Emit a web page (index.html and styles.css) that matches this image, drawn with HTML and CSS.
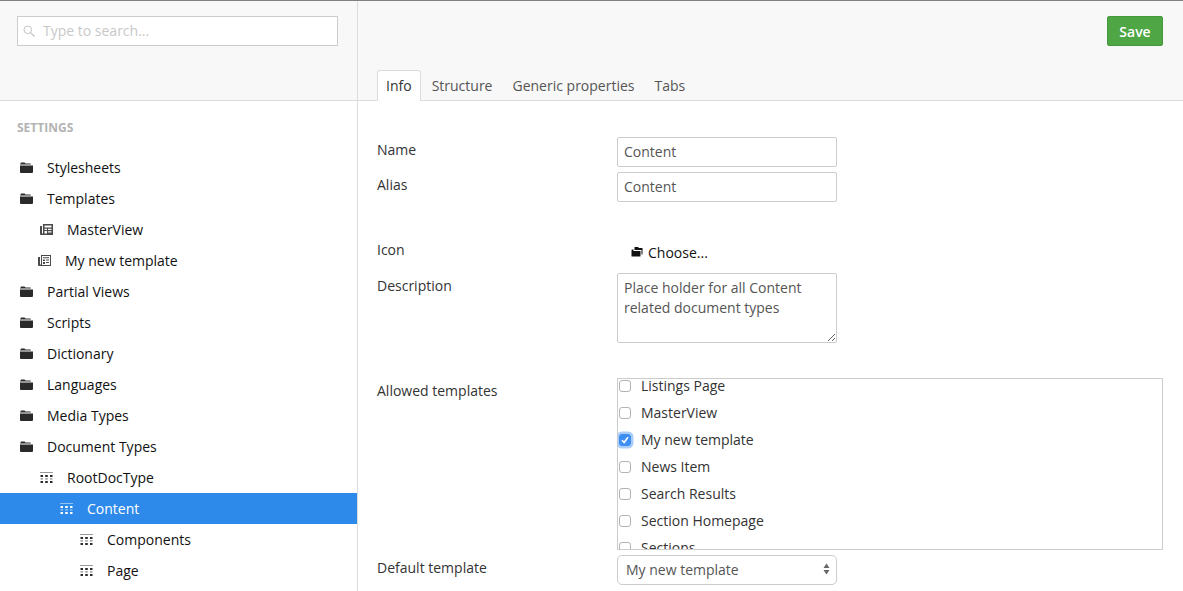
FILE: index.html
```html
<!DOCTYPE html>
<html>

<head>
	<meta charset="utf-8">
	<title>Settings</title>
	<link rel="stylesheet" href="styles.css">
</head>

<body>
	<svg class="defs" width="0" height="0">
		<symbol id="folder" viewBox="0 0 13 11">
			<path d="M0.5 1.5Q0.5 0.5 1.5 0.5H4.5L5.5 1.5H10Q11 1.5 11 2.5H1.5Q0.5 2.5 0.5 3.5ZM0 3.5H13V10Q13 11 12 11H1Q0 11 0 10Z" fill="currentColor"/>
		</symbol>
		<symbol id="template" viewBox="0 0 13 11">
			<path fill-rule="evenodd" d="M3 0H13V11H1Q0 11 0 10V2H2V9.5H3ZM4.5 1.5V3.5H11.5V1.5ZM4.5 4.8V6H7V4.8ZM4.5 7V9.5H7V7ZM8 4.8V6H11.5V4.8ZM8 7.2V8.4H11.5V7.2Z" fill="currentColor"/>
		</symbol>
		<symbol id="template-open" viewBox="0 0 13 11">
			<path fill-rule="evenodd" d="M3 0H13V11H1Q0 11 0 10V2H2V9.5H3ZM4 1V10H12V1ZM5 2.2H11V3.2H5ZM5 4.6H7V6H5ZM8 4.6H11V5.6H8ZM5 7H7V9H5ZM8 7H11V8H8Z" fill="currentColor"/>
		</symbol>
		<symbol id="doctype" viewBox="0 0 13 11">
			<path d="M0 0H13V0.8H0Z" fill="currentColor" opacity="0.6"/>
			<path d="M0.5 3H3V5H0.5ZM5.2 3H7.8V5H5.2ZM10 3H12.5V5H10ZM0.5 9H3V11H0.5ZM5.2 9H7.8V11H5.2ZM10 9H12.5V11H10Z" fill="currentColor"/>
			<path d="M0.5 6.2H3V7.6H0.5ZM5.2 6.2H7.8V7.6H5.2ZM10 6.2H12.5V7.6H10Z" fill="currentColor" opacity="0.55"/>
		</symbol>
	</svg>

	<div class="app">
		<div class="sidebar">
			<div class="search-box">
				<div class="search">
					<svg class="search-icon" width="12" height="12" viewBox="0 0 12 12">
						<circle cx="4.8" cy="4.8" r="3.8" fill="none" stroke="currentColor"/>
						<path d="M7.6 7.6L11.5 11.5" stroke="currentColor" stroke-width="1.3"/>
					</svg>
					<input class="search-input" type="text" placeholder="Type to search...">
				</div>
			</div>
			<div class="section-title">SETTINGS</div>
			<ul class="tree">
				<li class="node"><svg class="ico"><use href="#folder"/></svg>Stylesheets</li>
				<li class="node"><svg class="ico"><use href="#folder"/></svg>Templates</li>
				<li class="node lvl1"><svg class="ico soft"><use href="#template"/></svg>MasterView</li>
				<li class="node lvl1 shifted"><svg class="ico soft"><use href="#template-open"/></svg>My new template</li>
				<li class="node"><svg class="ico"><use href="#folder"/></svg>Partial Views</li>
				<li class="node"><svg class="ico"><use href="#folder"/></svg>Scripts</li>
				<li class="node"><svg class="ico"><use href="#folder"/></svg>Dictionary</li>
				<li class="node"><svg class="ico"><use href="#folder"/></svg>Languages</li>
				<li class="node"><svg class="ico"><use href="#folder"/></svg>Media Types</li>
				<li class="node"><svg class="ico"><use href="#folder"/></svg>Document Types</li>
				<li class="node lvl1"><svg class="ico"><use href="#doctype"/></svg>RootDocType</li>
				<li class="node lvl2 current"><svg class="ico"><use href="#doctype"/></svg>Content</li>
				<li class="node lvl3"><svg class="ico"><use href="#doctype"/></svg>Components</li>
				<li class="node lvl3"><svg class="ico"><use href="#doctype"/></svg>Page</li>
			</ul>
		</div>

		<div class="main">
			<div class="main-head">
				<div class="actions"><button class="save" type="button">Save</button></div>
				<div class="tabs">
					<a class="tab active">Info</a>
					<a class="tab">Structure</a>
					<a class="tab">Generic properties</a>
					<a class="tab">Tabs</a>
				</div>
			</div>

			<form class="form">
				<div class="row row-name">
					<label class="lbl">Name</label>
					<input class="field" type="text" value="Content">
				</div>
				<div class="row row-alias">
					<label class="lbl">Alias</label>
					<input class="field" type="text" value="Content">
				</div>
				<div class="row row-icon">
					<label class="lbl">Icon</label>
					<div class="choose">
						<svg class="choose-ico" width="12" height="10" viewBox="0 0 12 10">
							<path d="M3.5 0H7L8 1H11.5V7.5H10.5V3H3.5ZM0.5 3.5Q0.5 2.5 1.5 2.5H2.5V4H9.5V9Q9.5 9.5 9 9.5H1Q0.5 9.5 0.5 9Z" fill="#111"/>
						</svg>Choose...
					</div>
				</div>
				<div class="row row-desc">
					<label class="lbl">Description</label>
					<textarea class="field area">Place holder for all Content related document types</textarea>
				</div>
				<div class="row row-allowed">
					<label class="lbl">Allowed templates</label>
					<div class="listbox">
						<div class="opt"><span class="box"></span>Listings Page</div>
						<div class="opt"><span class="box"></span>MasterView</div>
						<div class="opt"><span class="box checked">
							<svg width="8" height="8" viewBox="0 0 8 8"><path d="M1 4.3L3.1 6.5L7 1.3" fill="none" stroke="#fff" stroke-width="1.6"/></svg>
						</span>My new template</div>
						<div class="opt"><span class="box"></span>News Item</div>
						<div class="opt"><span class="box"></span>Search Results</div>
						<div class="opt"><span class="box"></span>Section Homepage</div>
						<div class="opt"><span class="box"></span>Sections</div>
					</div>
				</div>
				<div class="row row-default">
					<label class="lbl">Default template</label>
					<div class="select">
						My new template
						<svg class="arrows" width="7" height="12" viewBox="0 0 7 12">
							<path d="M3.5 0.5L6.5 5H0.5ZM0.5 7H6.5L3.5 11.5Z" fill="#666"/>
						</svg>
					</div>
				</div>
			</form>
		</div>
	</div>
</body>

</html>
```
FILE: styles.css
```css
* {
	box-sizing: border-box;
}

html,
body {
	height: 100%;
	margin: 0;
	overflow: hidden;
}

body {
	font-family: "Open Sans", sans-serif;
	font-size: 14px;
	color: #222;
	background-color: #fff;
}

.defs {
	display: block;
	height: 0;
}

.app {
	display: flex;
	height: 591px;
	border-top: 1px solid #808080;
}

/* left column */
.sidebar {
	flex: 0 0 358px;
	border-right: 1px solid #dcdcdc;
}

.search-box {
	height: 100px;
	padding: 15px 19px 0 17px;
	background-color: #f8f8f8;
	border-bottom: 1px solid #dcdcdc;
}

.search {
	display: flex;
	align-items: center;
	height: 30px;
	background-color: #fff;
	border: 1px solid #ccc;
}

.search-icon {
	margin: 0 8px 0 5px;
	color: #c4c4c4;
}

.search-input {
	flex: 1;
	min-width: 0;
	border: 0;
	outline: 0;
	padding: 0 0 2px;
	font: 14px "Open Sans", sans-serif;
}

.search-input::placeholder {
	color: #c8c8c8;
	opacity: 1;
}

.section-title {
	padding: 19px 0 0 17px;
	height: 51px;
	font-size: 12px;
	line-height: 16px;
	font-weight: 700;
	color: #b3b3b3;
}

.tree {
	list-style: none;
	margin: 0;
	padding: 0;
}

.node {
	display: flex;
	align-items: center;
	height: 31px;
	padding-left: 20px;
	color: #111;
}

.ico {
	flex: none;
	width: 13px;
	height: 11px;
	margin-right: 14px;
	color: #2a2a2a;
}

.ico.soft {
	color: #4a4a4a;
}

.lvl1 {
	padding-left: 40px;
}

.lvl1.shifted {
	padding-left: 38px;
}

.lvl2 {
	padding-left: 60px;
}

.lvl3 {
	padding-left: 80px;
}

.current {
	background-color: #2e8aea;
	color: #fff;
}

.current .ico {
	color: #fff;
}

/* right column */
.main {
	flex: 1;
	min-width: 0;
}

.main-head {
	height: 100px;
	padding: 15px 20px 0 19px;
	background-color: #f8f8f8;
	border-bottom: 1px solid #dcdcdc;
}

.actions {
	display: flex;
	justify-content: flex-end;
	height: 54px;
}

.save {
	width: 56px;
	height: 30px;
	padding: 0;
	font: 600 14px "Open Sans", sans-serif;
	color: #fff;
	background-color: #4ea644;
	border: 1px solid #46983d;
	border-radius: 2px;
}

.tabs {
	display: flex;
	height: 31px;
}

.tab {
	height: 31px;
	padding: 0 9px;
	margin-right: 2px;
	line-height: 32px;
	color: #555;
}

.tab.active {
	background-color: #fff;
	color: #333;
	line-height: 30px;
	border: 1px solid #dcdcdc;
	border-bottom: 0;
	border-radius: 3px 3px 0 0;
	padding: 0 8px;
}

.form {
	padding: 36px 20px 0 19px;
}

.row {
	display: grid;
	grid-template-columns: 240px 1fr;
	align-items: start;
}

.lbl {
	color: #333;
	line-height: 20px;
}

.field {
	display: block;
	width: 220px;
	height: 30px;
	padding: 0 6px 2px;
	font: 14px "Open Sans", sans-serif;
	color: #555;
	background-color: #fff;
	border: 1px solid #ccc;
	border-radius: 2px;
	outline: 0;
}

.row-name .lbl {
	margin-top: 3px;
}

.row-alias {
	margin-top: 5px;
}

.row-alias .lbl {
	margin-top: 3px;
}

.row-icon {
	margin-top: 28px;
	height: 43px;
}

.row-icon .lbl {
	margin-top: 10px;
}

.choose {
	display: flex;
	align-items: center;
	height: 20px;
	margin-top: 12px;
	padding-left: 14px;
	color: #111;
}

.choose-ico {
	margin-right: 5px;
}

.row-desc .lbl {
	margin-top: 3px;
}

.area {
	height: 70px;
	padding: 4px 6px;
	line-height: 20px;
}

.row-allowed {
	margin-top: 35px;
}

.row-allowed .lbl {
	margin-top: 3px;
}

.listbox {
	height: 172px;
	overflow: hidden;
	border: 1px solid #ccc;
	padding-left: 1px;
}

.opt {
	display: flex;
	align-items: center;
	height: 27px;
	color: #333;
}

.opt:first-child {
	margin-top: -7px;
}

.box {
	flex: none;
	display: flex;
	align-items: center;
	justify-content: center;
	width: 12px;
	height: 12px;
	margin-right: 10px;
	background-color: #fff;
	border: 1px solid #b3b3b3;
	border-radius: 3px;
}

.box.checked {
	background-color: #3d8ef2;
	border-color: #3d8ef2;
	box-shadow: 0 0 0 2.5px #a9cdf8;
}

.row-default {
	margin-top: 5px;
}

.row-default .lbl {
	margin-top: 3px;
}

.select {
	display: flex;
	align-items: center;
	justify-content: space-between;
	width: 220px;
	height: 30px;
	padding: 0 6px 2px 8px;
	color: #555;
	background-color: #fff;
	border: 1px solid #ccc;
	border-radius: 5px;
}
```
